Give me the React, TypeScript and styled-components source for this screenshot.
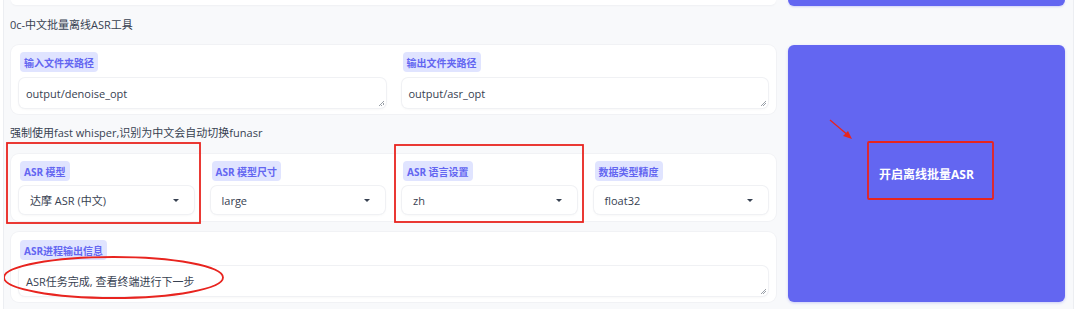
import styled, { createGlobalStyle } from 'styled-components'

const GlobalStyle = createGlobalStyle`
  html, body {
    margin: 0;
    padding: 0;
    background: #ffffff;
  }
  body {
    font-family: 'Open Sans', 'Noto Sans CJK SC', sans-serif;
    color: #374151;
  }
  * {
    box-sizing: border-box;
  }
`

const Page = styled.div`
  position: relative;
  width: 1071px;
  height: 309px;
  margin-left: 3px;
  padding: 0 8px 0 7px;
  background: #f8f9fb;
  border-left: 1px solid #eceef2;
  border-right: 1px solid #eceef2;
  overflow: hidden;
`

const TopRow = styled.div`
  display: grid;
  grid-template-columns: 765px 277px;
  column-gap: 12px;
  align-items: start;
`

const CardStub = styled.div`
  height: 5px;
  background: #ffffff;
  border-radius: 0 0 8px 8px;
  box-shadow: 0 1px 2px rgba(15, 23, 42, 0.04);
`

const ButtonStub = styled.div`
  height: 6px;
  background: #6366f1;
  border-radius: 0 0 6px 6px;
  box-shadow: 0 1px 2px rgba(99, 102, 241, 0.25);
`

const Layout = styled.div`
  display: grid;
  grid-template-columns: 765px 277px;
  column-gap: 12px;
`

const LeftColumn = styled.div`
  display: flex;
  flex-direction: column;
`

const Heading = styled.div`
  font-size: 11px;
  line-height: 16px;
  padding: 11px 0 12px;
  margin-left: -1px;
  color: #374151;
`

const Note = styled.div`
  font-size: 11px;
  line-height: 16px;
  padding: 11px 0 13px;
  margin-left: -1px;
  color: #374151;
`

const Card = styled.div<{ $cols: number; $top?: number; $bottom?: number }>`
  display: grid;
  grid-template-columns: repeat(${(p) => p.$cols}, 1fr);
  column-gap: ${(p) => (p.$cols > 2 ? 17 : 16)}px;
  padding: ${(p) => p.$top ?? 7}px 8px ${(p) => p.$bottom ?? 6}px;
  background: #ffffff;
  border-radius: 8px;
  box-shadow: 0 0 0 1px #f1f2f5;
`

const Gap = styled.div`
  height: 11px;
`

const Field = styled.div<{ $gap?: number }>`
  display: flex;
  flex-direction: column;
  align-items: flex-start;
  gap: ${(p) => p.$gap ?? 6}px;
  min-width: 0;
`

const Label = styled.span`
  display: inline-flex;
  align-items: center;
  height: 20px;
  padding: 0 4px;
  margin-left: 1px;
  border-radius: 4px;
  background: #e0e4ff;
  color: #6366f1;
  font-size: 10px;
  font-weight: 700;
  white-space: nowrap;
`

const TextBox = styled.div`
  position: relative;
  width: 100%;
  height: 30px;
  display: flex;
  align-items: center;
  padding: 0 7px;
  background: #ffffff;
  border-radius: 6px;
  box-shadow: 0 0 0 1px #f0f1f4, 0 1px 3px rgba(15, 23, 42, 0.06);
  font-size: 11px;
  color: #374151;

  &::after {
    content: '';
    position: absolute;
    right: 2px;
    bottom: 2px;
    width: 5px;
    height: 5px;
    background: linear-gradient(
      135deg,
      transparent 45%,
      #9aa0a8 45%,
      #9aa0a8 55%,
      transparent 55%,
      transparent 70%,
      #9aa0a8 70%,
      #9aa0a8 80%,
      transparent 80%
    );
  }
`

const Select = styled.div`
  width: 100%;
  height: 28px;
  display: flex;
  align-items: center;
  justify-content: space-between;
  padding: 0 15px 0 11px;
  background: #ffffff;
  border-radius: 6px;
  box-shadow: 0 0 0 1px #f0f1f4, 0 1px 3px rgba(15, 23, 42, 0.06);
  font-size: 11px;
  color: #374151;
`

const Caret = styled.span`
  width: 0;
  height: 0;
  border-left: 3px solid transparent;
  border-right: 3px solid transparent;
  border-top: 3px solid #374151;
`

const RunButton = styled.button`
  display: flex;
  align-items: center;
  justify-content: center;
  height: 257px;
  margin-top: 39px;
  border: none;
  border-radius: 6px;
  background: #6366f1;
  box-shadow: 0 1px 3px rgba(99, 102, 241, 0.3);
  color: #ffffff;
  font-family: 'Open Sans', 'Noto Sans CJK SC', sans-serif;
  font-size: 12px;
  font-weight: 700;
  cursor: pointer;
`

const Marks = styled.svg`
  position: absolute;
  left: -4px;
  top: 0;
  pointer-events: none;
`

const selects = [
  { label: 'ASR 模型', value: '达摩 ASR (中文)' },
  { label: 'ASR 模型尺寸', value: 'large' },
  { label: 'ASR 语言设置', value: 'zh' },
  { label: '数据类型精度', value: 'float32' },
]

export default function App() {
  return (
    <>
      <GlobalStyle />
      <Page>
        <TopRow>
          <CardStub />
          <ButtonStub />
        </TopRow>
        <Layout>
          <LeftColumn>
            <Heading>0c-中文批量离线ASR工具</Heading>
            <Card $cols={2}>
              <Field>
                <Label>输入文件夹路径</Label>
                <TextBox>output/denoise_opt</TextBox>
              </Field>
              <Field>
                <Label>输出文件夹路径</Label>
                <TextBox>output/asr_opt</TextBox>
              </Field>
            </Card>
            <Note>强制使用fast whisper,识别为中文会自动切换funasr</Note>
            <Card $cols={4} $bottom={7}>
              {selects.map((s) => (
                <Field key={s.label} $gap={5}>
                  <Label>{s.label}</Label>
                  <Select>
                    <span>{s.value}</span>
                    <Caret />
                  </Select>
                </Field>
              ))}
            </Card>
            <Gap />
            <Card $cols={1} $top={8}>
              <Field>
                <Label>ASR进程输出信息</Label>
                <TextBox>ASR任务完成, 查看终端进行下一步</TextBox>
              </Field>
            </Card>
          </LeftColumn>
          <RunButton>开启离线批量ASR</RunButton>
        </Layout>
        <Marks width="1080" height="309" viewBox="0 0 1080 309">
          <g fill="none" stroke="#e8241f" strokeWidth="1.8">
            <rect x="7" y="143" width="193" height="80" />
            <rect x="395" y="145" width="188" height="77" />
            <rect x="868" y="142" width="125" height="57" rx="1" />
            <ellipse cx="113.5" cy="277.5" rx="109.5" ry="20.5" />
            <line x1="830" y1="120" x2="849" y2="136" strokeWidth="1.3" />
          </g>
          <polygon points="852,139 843,136 848,131" fill="#e8241f" />
        </Marks>
      </Page>
    </>
  )
}
